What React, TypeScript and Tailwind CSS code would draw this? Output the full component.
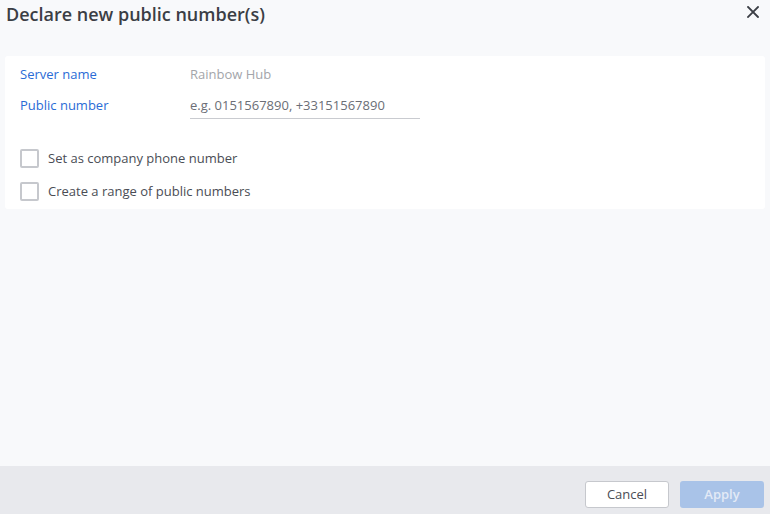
import React from "react";

export default function App() {
  return (
    <div
      className="w-[770px] h-[514px] bg-[#f8f9fb] flex flex-col overflow-hidden"
      style={{ fontFamily: '"Open Sans", sans-serif' }}
    >
      <div className="h-[56px] flex items-start justify-between pl-[6px] pr-[11px] pt-[1px]">
        <h1 className="text-[18px] leading-[26px] text-[#3b3e45] font-semibold">Declare new public number(s)</h1>
        <button className="mt-[5px] w-[12px] h-[12px] flex items-center justify-center">
          <svg width="12" height="12" viewBox="0 0 12 12">
            <path d="M1 1L11 11M11 1L1 11" stroke="#3b3e45" strokeWidth="1.8" strokeLinecap="square" />
          </svg>
        </button>
      </div>
      <div className="mx-[5px] w-[760px] bg-white rounded-[3px] pl-[15px] pt-[9px] pb-[8px]">
        <div className="flex items-center h-[20px] text-[13px]">
          <span className="w-[170px] text-[#2a6bd6]">Server name</span>
          <span className="text-[#a3a5aa]">Rainbow Hub</span>
        </div>
        <div className="flex items-start h-[54px] mt-[10px] text-[13px]">
          <span className="w-[170px] text-[#2a6bd6] leading-[20px]">Public number</span>
          <div className="w-[230px] border-b border-[#c9cbd0] h-[24px] leading-[20px] text-[#6b6e76]">
            e.g. 0151567890, +33151567890
          </div>
        </div>
        <div className="flex flex-col gap-[13px]">
          <label className="flex items-center gap-[9px] text-[13px] text-[#4a4d55]">
            <span className="w-[19px] h-[19px] border-2 border-[#c6c8cd] rounded-[2px] bg-white" />
            Set as company phone number
          </label>
          <label className="flex items-center gap-[9px] text-[13px] text-[#4a4d55]">
            <span className="w-[19px] h-[19px] border-2 border-[#c6c8cd] rounded-[2px] bg-white" />
            Create a range of public numbers
          </label>
        </div>
      </div>
      <div className="flex-1" />
      <div className="h-[48px] bg-[#e8e9ed] flex justify-end items-start pt-[15px] pr-[6px] gap-[11px]">
        <button className="w-[84px] h-[27px] bg-white border border-[#c6c8cd] rounded-[3px] text-[13px] text-[#4a4d55]">
          Cancel
        </button>
        <button className="w-[84px] h-[27px] bg-[#a9c3e8] rounded-[3px] text-[13px] font-semibold text-[#e3eaf6]">
          Apply
        </button>
      </div>
    </div>
  );
}
